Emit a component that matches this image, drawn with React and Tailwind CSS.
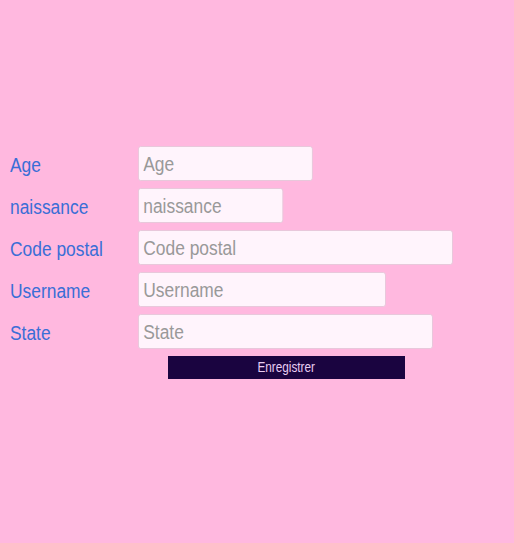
import React from 'react';

// widths are divided by 0.87 because the inputs are squeezed horizontally
const fields = [
  { label: 'Age', width: 'w-[201px]' },
  { label: 'naissance', width: 'w-[167px]' },
  { label: 'Code postal', width: 'w-[362px]' },
  { label: 'Username', width: 'w-[285px]' },
  { label: 'State', width: 'w-[339px]' },
];

export default function App() {
  return (
    <div className="min-h-[543px] overflow-hidden bg-[#ffb8df] pt-[146px] pl-[10px] font-['Liberation_Sans',Arial,sans-serif]">
      <form className="flex flex-col gap-[7px]">
        {fields.map(f => (
          <div key={f.label} className="flex items-center">
            <label className="w-[128px] pt-[3px] text-[20px] leading-[23px] text-[#3a6ed6]">
              <span className="inline-block origin-left scale-x-[0.87]">{f.label}</span>
            </label>
            <input
              placeholder={f.label}
              className={`${f.width} h-[35px] origin-left scale-x-[0.87] rounded-[3px] border border-[#e6c6da] bg-[#fff4fc] px-[5px] pt-[2px] text-[20px] text-gray-700 placeholder:text-[#999] outline-none`}
            />
          </div>
        ))}
        <div className="pl-[158px] -mt-[1px]">
          <button type="button" className="w-[237px] h-[23px] bg-[#1a0440] text-[14px] text-[#e8cdf2]">
            <span className="inline-block scale-x-[0.84]">Enregistrer</span>
          </button>
        </div>
      </form>
    </div>
  );
}
